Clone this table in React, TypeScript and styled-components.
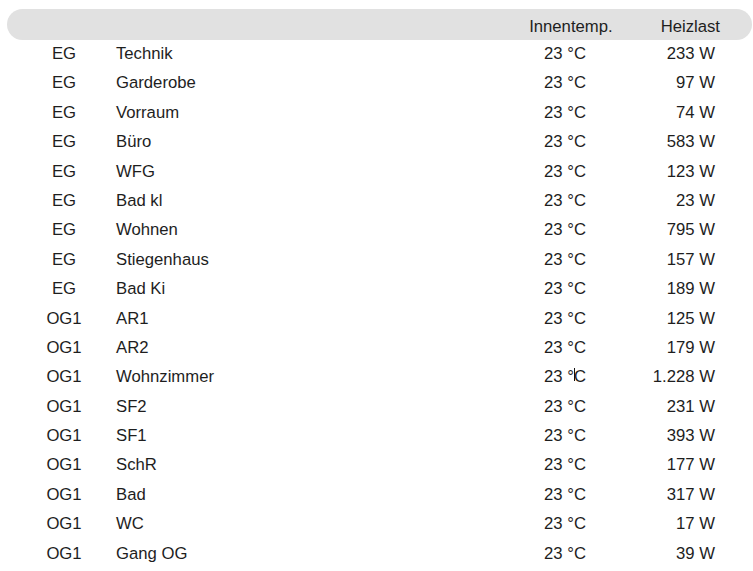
import React from "react";
import styled, { createGlobalStyle } from "styled-components";

const Global = createGlobalStyle`
  html, body { margin: 0; padding: 0; background: #ffffff; }
  body { font-family: "Liberation Sans", Arial, sans-serif; color: #1e1e1e; }
`;

const Page = styled.div`
  padding-top: 9px;
  width: 753px;
`;

const HeaderBar = styled.div`
  margin-left: 7px;
  width: 745px;
  height: 31px;
  box-sizing: border-box;
  border-radius: 15.5px;
  background: #e1e1e1;
  display: flex;
  justify-content: flex-end;
  gap: 48px;
  padding: 4px 32px 0 0;
  font-size: 16.7px;
  line-height: 27px;
`;

const List = styled.div`
  margin-top: -1px;
`;

const Row = styled.div`
  display: grid;
  grid-template-columns: 80px 387px 100px 88px;
  column-gap: 12px;
  padding-left: 24px;
  height: 29.4px;
  line-height: 29.4px;
  font-size: 16.7px;
  white-space: nowrap;
`;

const Floor = styled.div`
  text-align: center;
`;

const Name = styled.div`
  text-align: left;
`;

const Temp = styled.div`
  text-align: center;
`;

const Load = styled.div`
  text-align: right;
`;

const Caret = styled.span`
  display: inline-block;
  width: 1px;
  height: 13px;
  margin-right: -1px;
  background: #111;
  vertical-align: 1.5px;
`;

type Room = { floor: string; name: string; load: string; caret?: boolean };

const rooms: Room[] = [
  { floor: "EG", name: "Technik", load: "233 W" },
  { floor: "EG", name: "Garderobe", load: "97 W" },
  { floor: "EG", name: "Vorraum", load: "74 W" },
  { floor: "EG", name: "Büro", load: "583 W" },
  { floor: "EG", name: "WFG", load: "123 W" },
  { floor: "EG", name: "Bad kl", load: "23 W" },
  { floor: "EG", name: "Wohnen", load: "795 W" },
  { floor: "EG", name: "Stiegenhaus", load: "157 W" },
  { floor: "EG", name: "Bad Ki", load: "189 W" },
  { floor: "OG1", name: "AR1", load: "125 W" },
  { floor: "OG1", name: "AR2", load: "179 W" },
  { floor: "OG1", name: "Wohnzimmer", load: "1.228 W", caret: true },
  { floor: "OG1", name: "SF2", load: "231 W" },
  { floor: "OG1", name: "SF1", load: "393 W" },
  { floor: "OG1", name: "SchR", load: "177 W" },
  { floor: "OG1", name: "Bad", load: "317 W" },
  { floor: "OG1", name: "WC", load: "17 W" },
  { floor: "OG1", name: "Gang OG", load: "39 W" },
];

export default function App() {
  return (
    <Page>
      <Global />
      <HeaderBar>
        <span>Innentemp.</span>
        <span>Heizlast</span>
      </HeaderBar>
      <List>
        {rooms.map((r, i) => (
          <Row key={i}>
            <Floor>{r.floor}</Floor>
            <Name>{r.name}</Name>
            <Temp>
              {r.caret ? (
                <>
                  23 °<Caret />C
                </>
              ) : (
                "23 °C"
              )}
            </Temp>
            <Load>{r.load}</Load>
          </Row>
        ))}
      </List>
    </Page>
  );
}
